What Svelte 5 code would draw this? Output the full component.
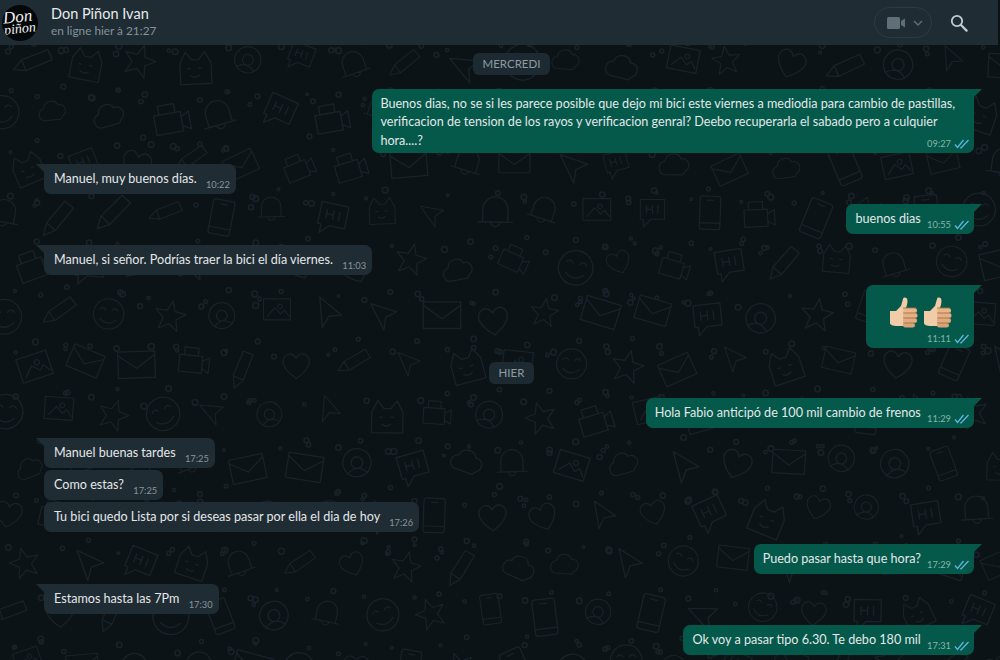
<script>
  const messages = [
    { kind: 'date', text: 'MERCREDI', gap: 8 },
    { kind: 'out', lines: ['Buenos dias, no se si les parece posible que dejo mi bici este viernes a mediodia para cambio de pastillas,', 'verificacion de tension de los rayos y verificacion genral? Deebo recuperarla el sabado pero a culquier', 'hora....?'], time: '09:27', gap: 14 },
    { kind: 'in', lines: ['Manuel, muy buenos días.'], time: '10:22', gap: 11, tail: true },
    { kind: 'out', lines: ['buenos dias'], time: '10:55', gap: 10 },
    { kind: 'in', lines: ['Manuel, si señor. Podrías traer la bici el día viernes.'], time: '11:03', gap: 11, tail: true },
    { kind: 'thumbs', time: '11:11', gap: 10 },
    { kind: 'date', text: 'HIER', gap: 14 },
    { kind: 'out', lines: ['Hola Fabio anticipó de 100 mil cambio de frenos'], time: '11:29', gap: 14 },
    { kind: 'in', lines: ['Manuel buenas tardes'], time: '17:25', gap: 10, tail: true },
    { kind: 'in', lines: ['Como estas?'], time: '17:25', gap: 2 },
    { kind: 'in', lines: ['Tu bici quedo Lista por si deseas pasar por ella el dia de hoy'], time: '17:26', gap: 2 },
    { kind: 'out', lines: ['Puedo pasar hasta que hora?'], time: '17:29', gap: 12 },
    { kind: 'in', lines: ['Estamos hasta las 7Pm'], time: '17:30', gap: 10, tail: true },
    { kind: 'out', lines: ['Ok voy a pasar tipo 6.30. Te debo 180 mil'], time: '17:31', gap: 11 }
  ];

  const shapes = [
    'M8 8h36v28H8z M13 31l10-11 8 8 5-5 6 8 M30 15a3 3 0 1 0 .1 0',
    'M26 4a20 20 0 1 0 .1 0 M14 19q4-5 8 0 M30 19q4-5 8 0 M15 31q11 10 22 0',
    'M4 14l21 15 21-15 M4 10h42v30H4z',
    'M8 42l5-14 24-22 9 9-24 23z M13 28l9 10',
    'M25 6l5 13 14 1-11 9 4 14-12-8-12 8 4-14-11-9 14-1z',
    'M25 42C8 30 6 20 11 14c5-5 11-3 14 3 3-6 9-8 14-3 5 6 3 16-14 28z',
    'M12 40c-8-2-9-15 1-17 1-10 16-13 20-3 9-2 14 10 5 16l-3 4z',
    'M8 44V20l7-13 7 9h8l7-9 7 13v24z M17 26h3 M30 26h3 M20 34q5 4 10 0',
    'M16 4h20a3 3 0 0 1 3 3v36a3 3 0 0 1-3 3H16a3 3 0 0 1-3-3V7a3 3 0 0 1 3-3z M13 38h26 M22 9h8',
    'M10 8h32v26H24l-10 10v-10h-4z M18 16v10 M18 21h8 M26 16v10 M33 16v10',
    'M25 6a14 14 0 0 1 14 14v14H11V20A14 14 0 0 1 25 6z M6 34h38 M20 34a5 5 0 0 0 10 0',
    'M12 8l30 14-14 5-4 15z',
    'M25 8a17 17 0 1 0 .1 0 M25 18a7 7 0 1 0 .1 0 M13 38q12-12 24 0',
    'M6 20h30v22H6z M36 26l9-5v20l-9-5 M12 10h18v10H12z'
  ];
  const dots = [[2, 6], [52, 10], [54, 46], [2, 50], [28, 54]];

  let seed = 7;
  const rnd = () => (seed = (seed * 16807) % 2147483647) / 2147483647;
  const doodles = [];
  const specks = [];
  for (let r = 0; r < 14; r++) {
    for (let c = 0; c < 20; c++) {
      const x = c * 54 + (r % 2) * 26 - 20 + rnd() * 8;
      const y = r * 50 - 10 + rnd() * 8;
      doodles.push({
        d: shapes[Math.floor(rnd() * shapes.length)],
        t: `translate(${x.toFixed(1)} ${y.toFixed(1)}) rotate(${Math.round(rnd() * 50 - 25)} 25 25) scale(${(0.7 + rnd() * 0.2).toFixed(2)})`
      });
      for (const [dx, dy] of dots) {
        if (rnd() > 0.55) specks.push({ x: (x + dx).toFixed(1), y: (y + dy).toFixed(1), r: (1.3 + rnd() * 1.7).toFixed(1) });
      }
    }
  }
</script>

<div class="app">
  <svg class="wallpaper" width="1000" height="660" aria-hidden="true">
    <g fill="none" stroke="#182329" stroke-width="1.5" stroke-linejoin="round" stroke-linecap="round">
      {#each doodles as s}
        <path d={s.d} transform={s.t} />
      {/each}
      {#each specks as s}
        <circle cx={s.x} cy={s.y} r={s.r} />
      {/each}
    </g>
  </svg>

  <header class="header">
    <div class="avatar"><span class="a1">Don</span><span class="a2">piñon</span></div>
    <div class="who">
      <div class="name">Don Piñon Ivan</div>
      <div class="seen">en ligne hier à 21:27</div>
    </div>
    <div class="video">
      <svg width="19" height="12" viewBox="0 0 19 12"><rect width="13" height="12" rx="1.5" fill="#5f6f78" /><path d="M14 4l4-2.5v9L14 8z" fill="#5f6f78" /></svg>
      <svg width="10" height="6" viewBox="0 0 10 6"><path d="M1 1l4 4 4-4" fill="none" stroke="#5f6f78" stroke-width="1.4" /></svg>
    </div>
    <svg class="search" width="18" height="18" viewBox="0 0 18 18"><circle cx="7" cy="7" r="5.2" fill="none" stroke="#c3ccd1" stroke-width="1.8" /><path d="M11 11l5.600 5.600" stroke="#c3ccd1" stroke-width="2.200" stroke-linecap="round" /></svg>
  </header>

  <main class="chat">
    {#each messages as m}
      {#if m.kind === 'date'}
        <div class="date g{m.gap}">{m.text}</div>
      {:else if m.kind === 'thumbs'}
        <div class="bubble out thumbs g{m.gap}">
          <div class="emoji">
            {#each [0, 1] as _}
              <svg width="30" height="31" viewBox="0 0 30 31">
                <path d="M2 14h6l5-5 2-7c.5-2 4-2 4.400 1 .4 3-.8 6-1.400 8v18H9c-4 0-7-1-7-3z" fill="#f0cda8" />
                <rect x="15" y="11" width="14" height="5" rx="2.500" fill="#e6b78e" />
                <rect x="15" y="16" width="14.500" height="5" rx="2.500" fill="#e3b188" />
                <rect x="15" y="21" width="14" height="5" rx="2.500" fill="#dfab80" />
                <rect x="15" y="26" width="12" height="4.500" rx="2.200" fill="#d9a379" />
                <path d="M15 11h13M15 16h14M15 21h14M15 26h12" stroke="#a8703f" stroke-width=".9" fill="none" />
              </svg>
            {/each}
          </div>
          <span class="meta"><span class="time">{m.time}</span><svg class="ticks" width="16" height="10" viewBox="0 0 16 10"><path d="M1 5.500l2.500 3L9.500 1M6.200 8.500L7 9l7.500-8" fill="none" stroke="#5cb6de" stroke-width="1.300" /></svg></span>
        </div>
      {:else}
        <div class="bubble {m.kind} g{m.gap}" class:tail={m.tail || m.kind === 'out'} class:multi={m.lines.length > 1}>
          <div class="text">
            {#each m.lines as line, i}
              {#if i > 0}<br />{/if}{line}
            {/each}
            {#if m.lines.length === 1}<span class="spacer"></span>{/if}
          </div>
          <span class="meta"><span class="time">{m.time}</span>{#if m.kind === 'out'}<svg class="ticks" width="16" height="10" viewBox="0 0 16 10"><path d="M1 5.500l2.500 3L9.500 1M6.200 8.500L7 9l7.500-8" fill="none" stroke="#5cb6de" stroke-width="1.300" /></svg>{/if}</span>
        </div>
      {/if}
    {/each}
  </main>
</div>

<style>
  :global(body) {
    background: #0c1317;
  }
  .app {
    position: relative;
    width: 1000px;
    height: 660px;
    overflow: hidden;
    background: #0c1317;
    font-family: Lato, "Noto Sans", sans-serif;
    color: #e3e7e9;
  }
  .wallpaper {
    position: absolute;
    inset: 0;
  }
  .header {
    position: relative;
    display: flex;
    align-items: center;
    width: 998px;
    height: 45px;
    padding: 0 30px 0 2px;
    box-sizing: border-box;
    background: #1f2c34;
  }
  .avatar {
    display: flex;
    flex-direction: column;
    align-items: center;
    justify-content: center;
    width: 36px;
    height: 36px;
    margin-right: 13px;
    border-radius: 50%;
    background: #05080a;
    color: #f2f2f2;
    font-family: "Liberation Serif", serif;
    font-style: italic;
    line-height: 12px;
    overflow: hidden;
  }
  .a1 {
    font-size: 17px;
    transform: rotate(-6deg) translateX(-2px);
  }
  .a2 {
    font-size: 14px;
    transform: rotate(-6deg);
  }
  .who {
    flex: 1;
    margin-top: -3px;
  }
  .name {
    font-size: 14.5px;
    line-height: 19px;
    color: #e6ebee;
  }
  .seen {
    font-size: 11.8px;
    line-height: 16px;
    color: #84939c;
  }
  .video {
    display: flex;
    align-items: center;
    gap: 7px;
    width: 58px;
    height: 31px;
    margin-right: 18px;
    padding-left: 12px;
    box-sizing: border-box;
    border: 1px solid #2d3a42;
    border-radius: 16px;
  }
  .chat {
    position: relative;
    display: flex;
    flex-direction: column;
    padding: 0 26px 0 44px;
  }
  .date {
    align-self: center;
    margin-left: 5px;
    padding: 0 10px;
    height: 22px;
    line-height: 22px;
    font-size: 11.5px;
    color: #8d9ba3;
    background: #1e2a31;
    border-radius: 6px;
  }
  .bubble {
    position: relative;
    align-self: flex-start;
    min-height: 30px;
    padding: 6px 8px 3px 10px;
    border-radius: 7px;
    font-size: 12.6px;
    line-height: 18.500px;
    white-space: nowrap;
    background: #202c33;
    box-sizing: border-box;
  }
  .bubble.out {
    align-self: flex-end;
    padding-left: 9px;
    background: #04594a;
  }
  .bubble.multi {
    padding: 5.500px 19px 2.500px 8px;
  }
  .tail::before {
    content: "";
    position: absolute;
    top: 0;
    width: 0;
    height: 0;
    border-top: 8px solid;
  }
  .in.tail {
    border-top-left-radius: 0;
  }
  .in.tail::before {
    left: -8px;
    border-left: 8px solid transparent;
    border-top-color: #202c33;
  }
  .out.tail {
    border-top-right-radius: 0;
  }
  .out.tail::before {
    right: -8px;
    border-right: 8px solid transparent;
    border-top-color: #04594a;
  }
  .spacer {
    display: inline-block;
    width: 28px;
  }
  .out .spacer {
    width: 42px;
  }
  .meta {
    position: absolute;
    right: 6px;
    bottom: 2px;
    display: flex;
    align-items: center;
    gap: 3px;
    font-size: 9.300px;
    line-height: 14px;
  }
  .out .meta {
    right: 4px;
  }
  .in .time {
    color: #87959d;
  }
  .out .time {
    color: #86b5aa;
  }
  .bubble.thumbs {
    width: 108px;
    height: 63px;
    padding: 12px 0 0 22px;
    border-top-right-radius: 0;
  }
  .thumbs::before {
    content: "";
    position: absolute;
    top: 0;
    right: -8px;
    border-top: 8px solid #04594a;
    border-right: 8px solid transparent;
  }
  .emoji {
    display: flex;
    gap: 4px;
  }
  .g2 { margin-top: 2px; }
  .g8 { margin-top: 8px; }
  .g10 { margin-top: 10px; }
  .g11 { margin-top: 11px; }
  .g12 { margin-top: 12px; }
  .g14 { margin-top: 14px; }
</style>
